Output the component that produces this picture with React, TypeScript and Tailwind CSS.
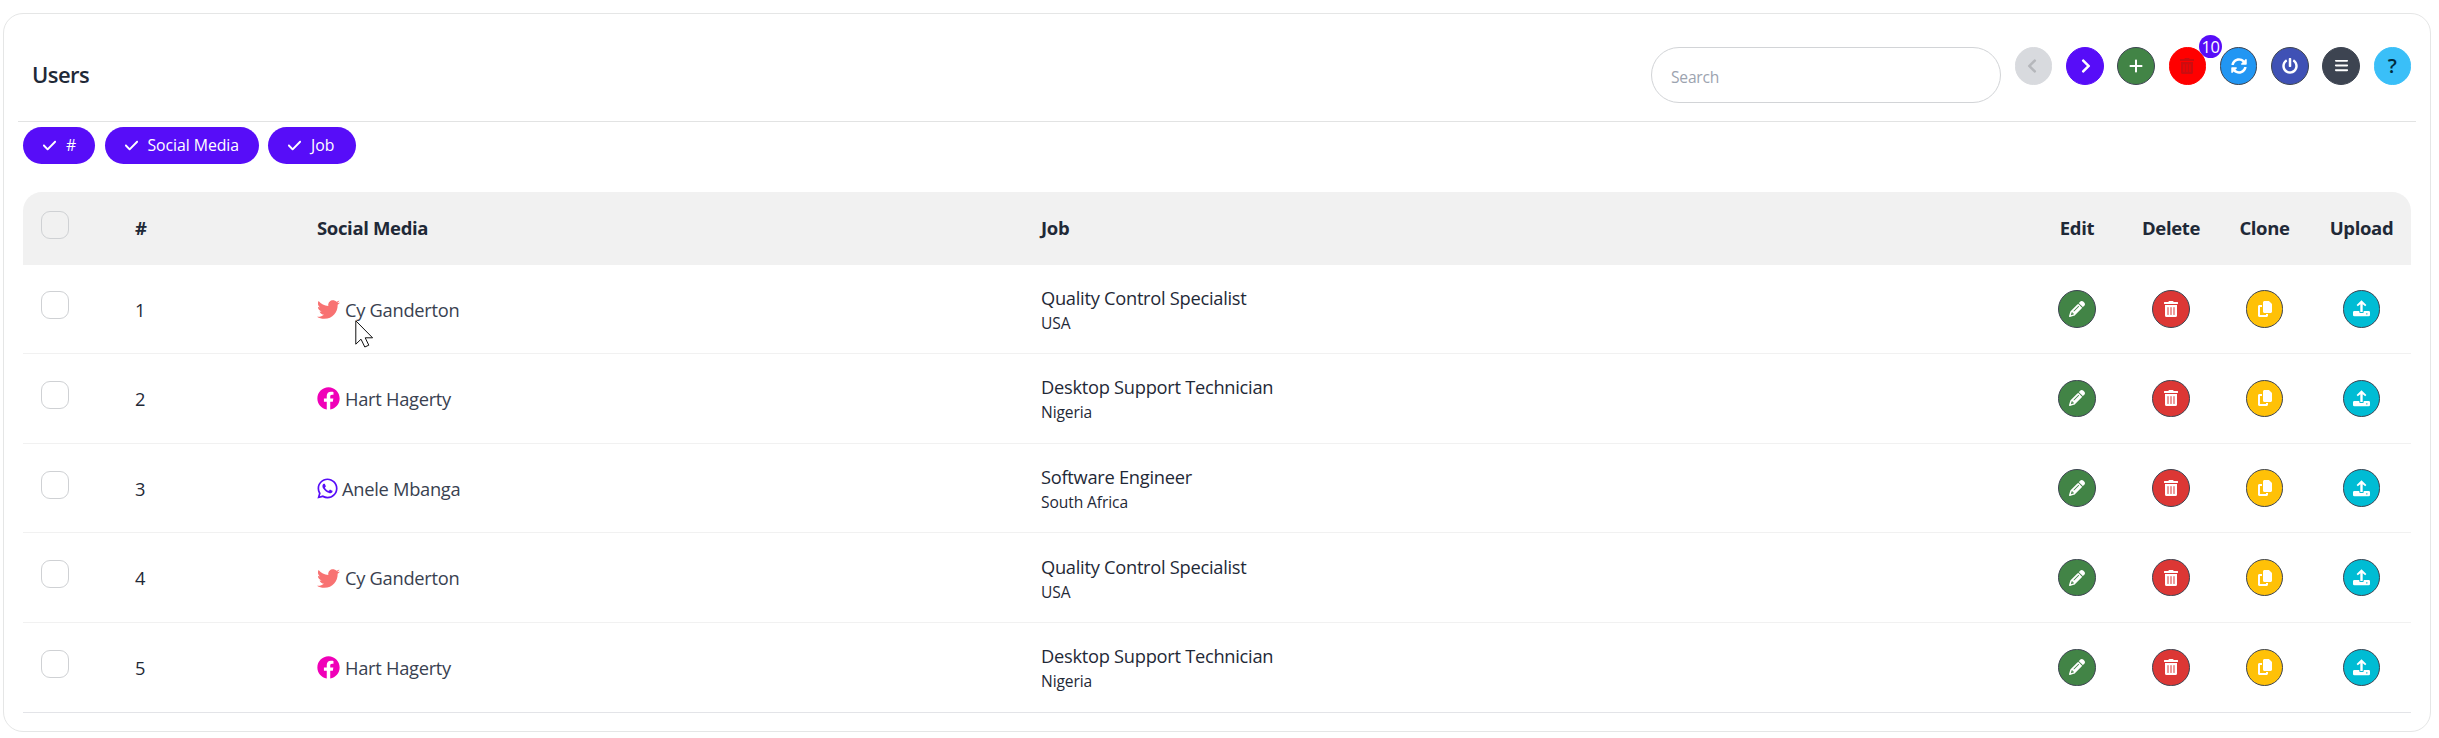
import React from 'react';
import {
  FaChevronLeft,
  FaChevronRight,
  FaFacebook,
  FaPowerOff,
  FaSyncAlt,
  FaTrashAlt,
  FaTwitter,
  FaWhatsapp,
} from 'react-icons/fa';
import { FaBars, FaCheck, FaCopy, FaPencil, FaPlus } from 'react-icons/fa6';

const GRID =
  'grid grid-cols-[112px_182px_724px_988px_96px_92px_95px_99px] items-center';

const chips = [
  { label: '#', width: 'w-[72px]' },
  { label: 'Social Media', width: 'w-[154px]' },
  { label: 'Job', width: 'w-[88px]' },
];

const twitter = <FaTwitter className="h-[23px] w-[23px] text-[#f87272]" />;
const facebook = <FaFacebook className="h-[23px] w-[23px] text-[#f000b8]" />;
const whatsapp = (
  <FaWhatsapp className="-mr-0.5 -ml-px h-[23px] w-[23px] text-[#570df8]" />
);

const users = [
  { id: 1, icon: twitter, name: 'Cy Ganderton', job: 'Quality Control Specialist', country: 'USA' },
  { id: 2, icon: facebook, name: 'Hart Hagerty', job: 'Desktop Support Technician', country: 'Nigeria' },
  { id: 3, icon: whatsapp, name: 'Anele Mbanga', job: 'Software Engineer', country: 'South Africa' },
  { id: 4, icon: twitter, name: 'Cy Ganderton', job: 'Quality Control Specialist', country: 'USA' },
  { id: 5, icon: facebook, name: 'Hart Hagerty', job: 'Desktop Support Technician', country: 'Nigeria' },
];

const UploadIcon = () => (
  <svg viewBox="0 0 17 17" className="h-[17px] w-[17px]" fill="currentColor">
    <path d="M8.5 0.3 L13.4 5 L12.2 6.3 L9.7 4.2 V12 H7.3 V4.2 L4.8 6.3 L3.6 5 Z" />
    <path
      fillRule="evenodd"
      d="M1.4 11 H6.3 V12.2 Q6.3 13 7.3 13 H9.7 Q10.7 13 10.7 12.2 V11 H15.6 Q17 11 17 12.3 V15 Q17 16.3 15.6 16.3 H1.4 Q0 16.3 0 15 V12.3 Q0 11 1.4 11 Z M13.2 13.2 V14.4 H14.4 V13.2 Z"
    />
  </svg>
);

type RoundButtonProps = {
  className: string;
  children: React.ReactNode;
};

const RoundButton = ({ className, children }: RoundButtonProps) => (
  <button
    className={`flex h-[37.5px] w-[37.5px] shrink-0 items-center justify-center rounded-full border ${className}`}
  >
    {children}
  </button>
);

const Checkbox = () => (
  <span className="block h-7 w-7 rounded-[9px] border border-[#cfd1d4]" />
);

const Toolbar = () => (
  <div className="flex items-start gap-[13.75px]">
    <input
      placeholder="Search"
      className="h-14 w-[350px] rounded-full border border-[#d2d4d7] bg-white pt-[3px] pl-[19px] text-[15.6px] tracking-[-0.2px] placeholder:text-[#9ca3af]"
    />
    <RoundButton className="border-[#d8dade] bg-[#d8dade] text-[#b5b7bb]">
      <FaChevronLeft className="mr-1 h-4 w-4" />
    </RoundButton>
    <RoundButton className="border-[#570df8] bg-[#570df8] text-white">
      <FaChevronRight className="ml-0.5 h-4 w-4" />
    </RoundButton>
    <RoundButton className="border-[#3d4451] bg-[#428446] text-white">
      <FaPlus className="h-4 w-4" />
    </RoundButton>
    <div className="relative">
      <RoundButton className="border-[#ff0000] bg-[#ff0000] text-[#cc0c0f]">
        <FaTrashAlt className="h-4 w-4" />
      </RoundButton>
      <span className="absolute -top-3 left-[30.5px] flex h-[23px] w-[23px] items-center justify-center rounded-full bg-[#570df8] pt-0.5 text-[16.5px] leading-none tracking-[-0.5px] text-white">
        10
      </span>
    </div>
    <RoundButton className="border-[#3d4451] bg-[#2196f3] text-white">
      <FaSyncAlt className="h-4 w-4" />
    </RoundButton>
    <RoundButton className="border-[#3d4451] bg-[#3f51b5] text-white">
      <FaPowerOff className="h-4 w-4" />
    </RoundButton>
    <RoundButton className="border-[#3d4451] bg-[#3d4451] text-white">
      <FaBars className="h-[15px] w-[15px]" />
    </RoundButton>
    <RoundButton className="border-[#3abff8] bg-[#3abff8] text-[#002b3d]">
      <span className="pt-px text-[20px] leading-none font-semibold">?</span>
    </RoundButton>
  </div>
);

const App: React.FC = () => {
  return (
    <div className="h-[738px] bg-white pt-[13px] pl-[3px] font-['Open_Sans','Noto_Sans',sans-serif] text-[#1f2937]">
      <div className="relative h-[719px] w-[2428px] rounded-[20px] border border-[#e5e6e6]">
        <div className="mx-3.5 flex h-[108px] items-start justify-between border-b border-[#e2e3e3] pt-[33px] pr-[5px] pl-3.5">
          <h2 className="mt-[13px] text-[22px] leading-[28px] font-semibold tracking-[-0.55px]">
            Users
          </h2>
          <Toolbar />
        </div>

        <div className="mt-[5px] ml-[19px] flex gap-[9.5px]">
          {chips.map((chip) => (
            <button
              key={chip.label}
              className={`flex h-[37px] items-center gap-[9px] rounded-full bg-[#570df8] pt-px pl-[19px] text-[15.8px] tracking-[-0.05px] whitespace-nowrap text-white ${chip.width}`}
            >
              <FaCheck className="-mt-px h-[15px] w-[15px]" />
              {chip.label}
            </button>
          ))}
        </div>

        <div className="mt-7 ml-[19px] w-[2388px]">
          <div
            className={`${GRID} h-[72.6px] rounded-t-[19px] bg-[#f1f1f1] text-[18.5px] font-bold tracking-[-0.35px]`}
          >
            <div className="-mt-[7px] pl-[18px]">
              <Checkbox />
            </div>
            <div>#</div>
            <div>Social Media</div>
            <div>Job</div>
            <div className="text-center">Edit</div>
            <div className="text-center">Delete</div>
            <div className="text-center">Clone</div>
            <div className="text-center">Upload</div>
          </div>

          {users.map((user) => (
            <div
              key={user.id}
              className={`${GRID} h-[89.6px] border-b border-[#f1f1f1] text-[18.3px] tracking-[-0.28px] last:border-[#e3e4e8]`}
            >
              <div className="-mt-[7px] pl-[18px]">
                <Checkbox />
              </div>
              <div className="pt-px">{user.id}</div>
              <div className="flex items-center gap-[5px] pt-px text-[#394150]">
                {user.icon}
                {user.name}
              </div>
              <div className="pt-0.5">
                <div className="leading-[27px]">{user.job}</div>
                <div className="text-[15.6px] leading-[25px] tracking-[-0.1px]">
                  {user.country}
                </div>
              </div>
              <div className="flex justify-center">
                <RoundButton className="border-[#3d4451] bg-[#428446] text-white">
                  <FaPencil className="h-4 w-4" />
                </RoundButton>
              </div>
              <div className="flex justify-center">
                <RoundButton className="border-[#3d4451] bg-[#dc3735] text-white">
                  <FaTrashAlt className="h-4 w-4" />
                </RoundButton>
              </div>
              <div className="flex justify-center">
                <RoundButton className="border-[#3d4451] bg-[#ffc107] text-white">
                  <FaCopy className="h-4 w-4" />
                </RoundButton>
              </div>
              <div className="flex justify-center">
                <RoundButton className="border-[#3d4451] bg-[#00bcd4] text-white">
                  <UploadIcon />
                </RoundButton>
              </div>
            </div>
          ))}
        </div>

        {/* mouse pointer */}
        <svg
          viewBox="0 0 19 28"
          className="absolute top-[306px] left-[351px] h-7 w-[19px]"
        >
          <path
            d="M0.8 0.8 V24.2 L6 19.2 L9.8 27 L13.8 25.2 L10.2 17.8 H17.6 Z"
            fill="white"
            stroke="#111"
            strokeWidth="1"
          />
        </svg>
      </div>
    </div>
  );
};

export default App;
